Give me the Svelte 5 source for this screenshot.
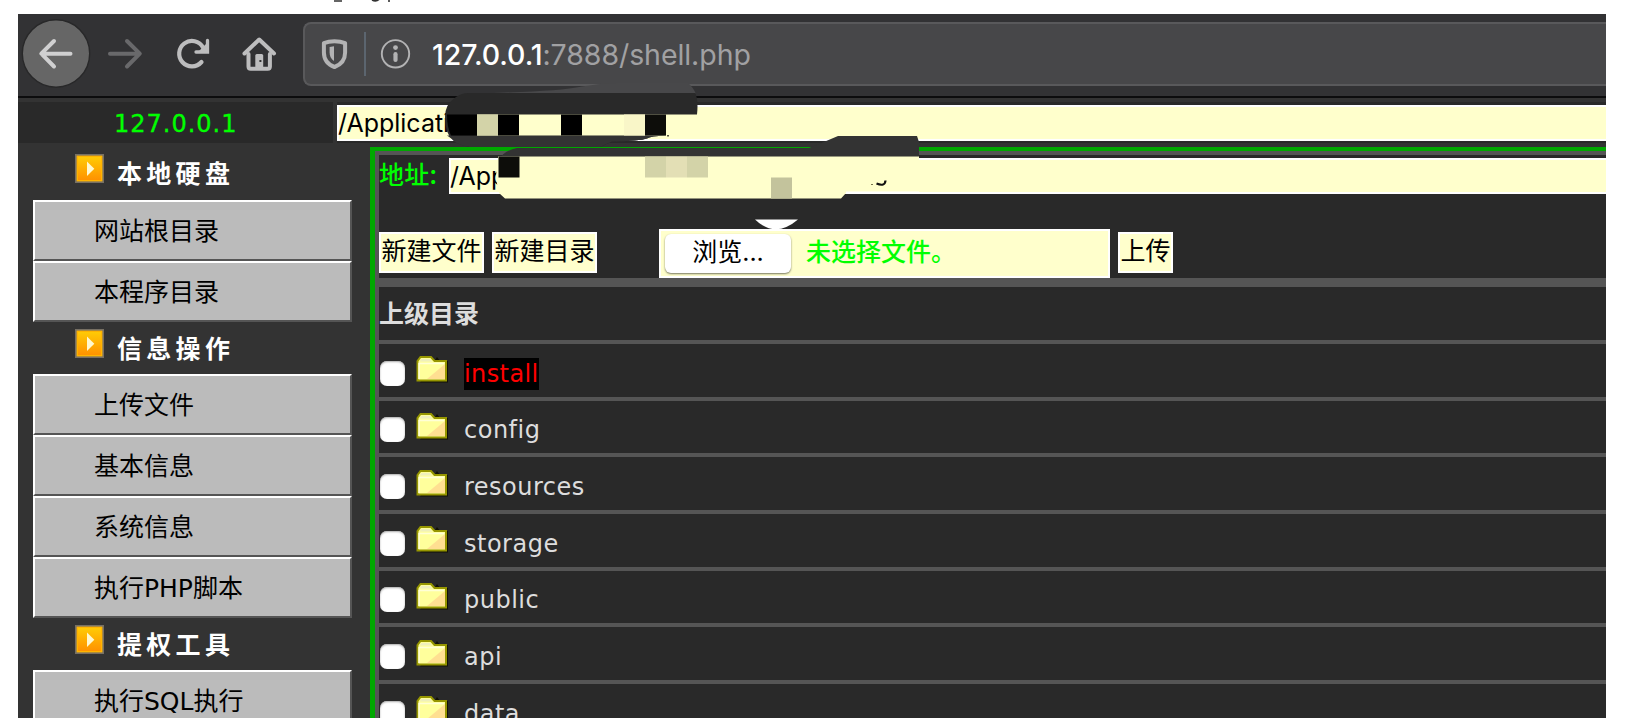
<script>
  const groups = [
    { title: '本地硬盘', items: ['网站根目录', '本程序目录'] },
    { title: '信息操作', items: ['上传文件', '基本信息', '系统信息', '执行PHP脚本'] },
    { title: '提权工具', items: ['执行SQL执行'] }
  ];
  const folders = ['install', 'config', 'resources', 'storage', 'public', 'api', 'data'];
</script>

<div class="page">
  <svg class="scraps" width="80" height="4" viewBox="0 0 80 4">
    <path d="M4 1h8M42 0q4 2 7-.5M59 0v2" fill="none" stroke="#333" stroke-width="1.6" />
  </svg>

  <div class="window">
    <header class="toolbar">
      <svg class="nav" width="285" height="82" viewBox="18 14 285 82" fill="none" stroke-linecap="round" stroke-linejoin="round">
        <circle cx="56" cy="53.5" r="33.7" fill="#666" stroke="#282829" stroke-width="1.4" />
        <path d="M70.5 53.7H41.5M54 41 41.3 53.7 54 66.500" stroke="#d0d0d1" stroke-width="4" />
        <path d="M110 53.700H139M127 41l12.800 12.700L127 66.500" stroke="#69696b" stroke-width="4" />
        <path d="M201.500 62A12.700 12.700 0 1 1 203 47.500" stroke="#bdbdbe" stroke-width="4.200" />
        <path d="M207.500 40.500V52H196" stroke="#bdbdbe" stroke-width="3.300" stroke-linejoin="miter" />
        <path d="M207 43v9h-9z" fill="#bdbdbe" />
        <path d="M244.500 53.500 259.200 39.500 274 53.500" stroke="#bdbdbe" stroke-width="4" />
        <path d="M248.500 54V66.500q0 2.200 2.200 2.200H267.700q2.200 0 2.200-2.200V54" stroke="#bdbdbe" stroke-width="4" />
        <path d="M255.300 68V55.500q0-1.500 1.500-1.500h4.900q1.500 0 1.500 1.500V68z" fill="#bdbdbe" />
        <rect x="259.400" y="60" width="2" height="2" fill="#333" />
      </svg>
      <div class="urlbar">
        <svg width="114" height="60" viewBox="305 24 114 60" fill="none">
          <path d="M334.500 41.300c4.200 0 7.600.6 10.600 1.800v9.400c0 7-4.300 12.200-10.600 14.500-6.300-2.300-10.600-7.500-10.600-14.500v-9.400c3-1.200 6.400-1.800 10.600-1.800z" stroke="#b3b3b4" stroke-width="4" stroke-linejoin="round" />
          <path d="M334 46.300V61c-3.200-2.200-4.400-5-4.400-8.700v-5.200z" fill="#b3b3b4" />
          <path d="M365 32v44" stroke="#606b76" stroke-width="1.700" />
          <circle cx="395.500" cy="53.800" r="13.700" stroke="#b3b3b4" stroke-width="1.900" />
          <circle cx="395.500" cy="47.600" r="2.400" fill="#b3b3b4" />
          <path d="M395.500 54.200v5.800" stroke="#b3b3b4" stroke-width="4.200" stroke-linecap="round" />
        </svg>
        <span class="url"><b>127.0.0.1</b>:7888/shell.php</span>
      </div>
    </header>

    <div class="hostrow">
      <div class="host"><span>127.0.0.1</span></div>
      <div class="rootcell"><div class="path root">/Applicati</div></div>
    </div>

    <div class="main">
      <nav class="sidebar">
        {#each groups as group}
          <h2>
            <svg width="29" height="29" viewBox="0 0 29 29">
              <defs>
                <linearGradient id="amber" x1="0" y1="0" x2="0" y2="1">
                  <stop offset="0" stop-color="#ffca05" />
                  <stop offset="1" stop-color="#ff9200" />
                </linearGradient>
              </defs>
              <rect x=".8" y=".8" width="27.400" height="27.400" fill="#ffb400" stroke="#777064" stroke-width="1.600" />
              <rect x="3" y="3" width="23" height="23" fill="url(#amber)" />
              <path d="M12 7.500l7.300 7.200L12 22z" fill="#fff8cf" />
            </svg>
            <span>{group.title}</span>
          </h2>
          {#each group.items as item}
            <div class="item">{item}</div>
          {/each}
        {/each}
      </nav>

      <section class="panel">
        <div class="address">
          <span class="label">地址:</span>
          <div class="path">/App</div>
        </div>
        <div class="actions">
          <div class="btn">新建文件</div>
          <div class="btn">新建目录</div>
          <div class="file">
            <div class="browse">浏览...</div>
            <span>未选择文件。</span>
          </div>
          <div class="btn">上传</div>
        </div>
        <div class="row parent"><span>上级目录</span></div>
        {#each folders as name, i}
          <div class="row">
            <span class="check"></span>
            <svg class="folder" width="33" height="28" viewBox="0 0 33 28">
              <path d="M4 27.500h28V6h-8l-3-4z" fill="#111106" />
              <path d="M1.500 25.500V6l3-4h10.500l3.500 4H30v19.500z" fill="#ffff9c" stroke="#969600" stroke-width="2" />
              <path d="M5 4h9l2 2.500H4z" fill="#efefbd" />
              <path d="M29 9v15H11z" fill="#ffce8c" opacity=".65" />
              <path d="M3 24V8.500h25" fill="none" stroke="#ffffd6" stroke-width="1.500" />
            </svg>
            <span class="name" class:hot={i === 0}>{name}</span>
          </div>
        {/each}
      </section>
    </div>
  </div>

  <svg class="marks" width="500" height="150" viewBox="440 82 500 150">
    <path d="M505 92.500Q560 91 582 86.500 600 83 618 83H688Q693 87 696 94H470z" fill="#48484a" />
    <path d="M445 117Q445 104 456 97 462 93 468 93H695.500Q698.500 101 697 114.500H666V135.500Q650 136 647 138.500 640 141 612 141.500L600 147H470Q458 145 453 140 445 134 445 117z" fill="#292929" />
    <path d="M447 135.500H666Q650 136 647 138.500 640 141 612 141.500L600 147H470Q456 145 452 139z" fill="#333" />
    <path d="M447 114.500h30v21h-26q-4-8-4-21z" fill="#000" />
    <rect x="477" y="114.500" width="189" height="21" fill="#ffc" />
    <rect x="477" y="114.500" width="21" height="21" fill="#d3d3a8" />
    <rect x="498" y="114.500" width="21" height="21" fill="#000" />
    <rect x="561" y="114.500" width="21" height="21" fill="#000" />
    <rect x="624" y="114.500" width="21" height="21" fill="#f9f6c8" />
    <rect x="645" y="114.500" width="21" height="21" fill="#0d0d0a" />
    <rect x="667" y="135" width="2" height="1.500" fill="#555540" />
    <path d="M498 160Q505 150 517 148H809L825 141.500 838 136H917L919 142V156.500H498z" fill="#333" />
    <path d="M498 156.500H919V193H846L841 198.500H505L499 193Q494 175 498 160z" fill="#ffc" />
    <rect x="498.500" y="156.500" width="21" height="21" fill="#0d0d0a" />
    <rect x="645" y="156.500" width="21" height="21" fill="#d3d3a8" />
    <rect x="666" y="156.500" width="21" height="21" fill="#e3dfb5" />
    <rect x="687" y="156.500" width="21" height="21" fill="#d3d3a8" />
    <rect x="771" y="177.500" width="21" height="21" fill="#c3c39c" />
    <path d="M846 192.300H919" stroke="#fff" stroke-width="1.800" />
    <path d="M876.500 183.500Q885 187 885.500 180.500" fill="none" stroke="#111" stroke-width="2.200" />
    <rect x="871" y="184" width="2" height="1" fill="#777750" />
    <path d="M755 219.500H798Q775 239 755 219.500z" fill="#fff" />
  </svg>
</div>

<style>
  :global(body) { margin: 0; background: #fff; overflow: hidden; }
  .page {
    position: relative; width: 1648px; height: 718px; box-sizing: border-box;
    padding: 14px 42px 0 18px; overflow: hidden; background: #fff;
    font-family: "DejaVu Sans", "Noto Sans CJK SC", sans-serif; font-size: 24px;
  }
  .scraps { position: absolute; left: 330px; top: 0; }
  .marks { position: absolute; left: 440px; top: 82px; }
  .window { height: 704px; background: #333; overflow: hidden; display: flex; flex-direction: column; }
  .toolbar {
    flex: none; height: 84px; box-sizing: border-box; background: #323234;
    border-bottom: 2px solid #0c0c0d; display: flex; align-items: flex-start;
  }
  .nav { flex: none; display: block; }
  .urlbar {
    flex: 1; height: 64px; margin-top: 8px; box-sizing: border-box; background: #474749;
    border: 2px solid #59595b; border-right: 0; border-radius: 8px 0 0 8px; display: flex; align-items: center;
  }
  .url {
    font-family: Inter, sans-serif; font-size: 28.500px; color: #a1a1a3; margin-left: 13px;
    white-space: nowrap; letter-spacing: -.07px;
  }
  .url b { font-weight: 500; color: #fff; }
  .hostrow { flex: none; display: flex; gap: 4px; margin-top: 4px; height: 41px; }
  .host {
    width: 315px; background: #292929; color: #0f0; line-height: 45px; letter-spacing: 1px;
    -webkit-text-stroke: .3px #0f0;
  }
  .host span { margin-left: 96px; }
  .rootcell { flex: 1; background: #292929; padding-top: 3px; }
  .path {
    box-sizing: border-box; height: 36px; flex: 1; background: #ffc; border: 2px solid #fff; border-right: 0;
    color: #000; font-family: Inter, sans-serif; font-size: 25px; line-height: 32px; white-space: nowrap;
    text-indent: -1px;
  }
  .main { flex: 1; min-height: 0; display: flex; }
  .sidebar { width: 352px; box-sizing: border-box; padding: 4px 34px 0 15px; }
  h2 {
    margin: 0; height: 52px; display: flex; align-items: flex-start; color: #fff;
    font-size: 25px; font-weight: 700; letter-spacing: 4.300px;
  }
  h2 svg { margin: 7px 13px 0 42px; }
  h2 span { line-height: 55px; }
  .sidebar h2:first-child { height: 52.500px; }
  .item {
    box-sizing: border-box; width: 318.500px; height: 61px; background: #bbb; color: #000;
    border: 2px solid; border-color: #fff #555 #555 #fff; padding-left: 59px;
    font-size: 25px; line-height: 60px; white-space: nowrap;
  }
  .panel {
    flex: 1; min-width: 0; margin-top: 4px; border: solid #00a800; border-width: 4px 0 0 5px;
    box-shadow: inset 4px 4px 0 #555; background: #292929; padding: 7px 0 0 4px;
  }
  .address { display: flex; }
  .label {
    color: #0f0; font-family: "Noto Sans CJK SC", sans-serif; font-weight: 500; font-size: 25px;
    line-height: 31px; height: 36px; width: 70px; white-space: nowrap; letter-spacing: .3px;
  }
  .actions {
    height: 93px; box-sizing: border-box; padding-top: 35px; border-bottom: 9px solid #555;
    display: flex; gap: 8px; align-items: center;
  }
  .btn {
    box-sizing: border-box; height: 41px; margin-top: -3px; padding: 0 1px; background: #ffc; border: 2px solid #fff;
    color: #000; font-size: 25px; line-height: 36px; width: 105px; white-space: nowrap; text-indent: -.5px;
  }
  .btn:last-child { width: 55px; }
  .file {
    box-sizing: border-box; width: 451px; height: 49px; margin-left: 54px; border: 2px solid #fff;
    background: #ffc; display: flex; align-items: center; gap: 15px; padding-left: 4px;
    color: #0f0; font-size: 25px; font-weight: 500;
  }
  .file span { font-family: "Noto Sans CJK SC", sans-serif; font-weight: 500; line-height: 40px; margin-top: -7px; }
  .browse {
    width: 126px; height: 39px; margin-top: -1px; border-radius: 6px; background: #fff; box-shadow: 0 1px 2px #777760;
    color: #000; font-family: Inter, "Noto Sans CJK SC", sans-serif; font-weight: 400; text-align: center; line-height: 37px;
  }
  .row {
    height: 56.670px; box-sizing: border-box; border-bottom: 4px solid #555;
    display: flex; align-items: center; color: #ddd; padding-left: 1px; white-space: nowrap;
  }
  .parent { font-size: 25px; font-weight: 700; height: 57px; padding-left: 0; }
  .parent span { margin-top: -3px; }
  .check {
    width: 25px; height: 25px; margin-top: 6px; border-radius: 7px; background: #fff;
    box-shadow: inset 0 1px 2px #aaa;
  }
  .folder { margin: -2px 15px 0 11px; }
  .name { line-height: 32px; margin-top: 7px; letter-spacing: .5px; }
  .hot { background: #000; color: #f00; letter-spacing: .4px; }
</style>
